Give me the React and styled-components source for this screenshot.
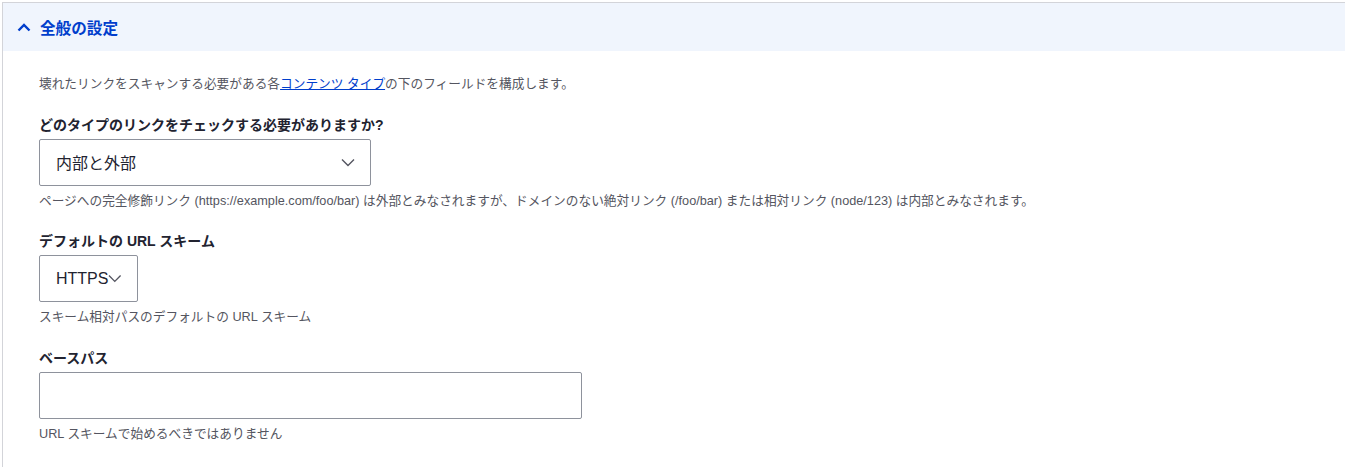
import React from 'react';
import styled, { createGlobalStyle } from 'styled-components';

const GlobalStyle = createGlobalStyle`
  html, body {
    margin: 0;
    background: #fff;
    overflow: hidden;
  }
  body {
    font-family: "Liberation Sans", "Noto Sans CJK JP", sans-serif;
    color: #222330;
  }
`;

const Page = styled.div`
  padding: 2px 0 0 2px;
`;

const Details = styled.section`
  border: 1px solid #d3d4d9;
  border-right: none;
  border-bottom: none;
  min-height: 480px;
`;

const Summary = styled.div`
  display: flex;
  align-items: center;
  gap: 9px;
  height: 48px;
  padding-left: 14px;
  background: #f0f5fd;
  color: #003ecc;
  font-size: 15.6px;
  font-weight: 700;
`;

const Content = styled.div`
  padding: 23px 0 0 36px;
  display: flex;
  flex-direction: column;
  gap: 21.5px;
`;

const Description = styled.div`
  font-size: 12.7px;
  line-height: 20px;
  color: #545560;
  margin-top: ${({ $tight }) => ($tight ? '5px' : '0')};
`;

const Link = styled.a`
  color: #003ecc;
  text-decoration: underline;
`;

const FormItem = styled.div`
  display: flex;
  flex-direction: column;
  align-items: flex-start;
`;

const Label = styled.label`
  font-size: 14px;
  font-weight: 700;
  line-height: 18px;
  margin-bottom: 5px;
  color: #222330;
`;

const SelectBox = styled.div`
  box-sizing: border-box;
  display: flex;
  align-items: center;
  justify-content: space-between;
  width: ${({ $width }) => $width}px;
  height: 47px;
  padding: 0 15px 0 16px;
  border: 1px solid #8e929c;
  border-radius: 2px;
  font-size: 16px;
  color: #222330;
`;

const TextInput = styled.input`
  box-sizing: border-box;
  width: 543px;
  height: 47px;
  border: 1px solid #8e929c;
  border-radius: 2px;
  padding: 0 16px;
  font-size: 16px;
  font-family: inherit;
  outline: none;
`;

const Chevron = ({ up }) => (
  <svg width="14" height="9" viewBox="0 0 14 9" fill="none">
    {up ? (
      <path d="M1.5 7.5 L7 2 L12.5 7.5" stroke="#003ecc" strokeWidth="2.4" />
    ) : (
      <path d="M1 1.5 L7 7.5 L13 1.5" stroke="#545560" strokeWidth="1.4" />
    )}
  </svg>
);

export default function App() {
  return (
    <Page>
      <GlobalStyle />
      <Details>
        <Summary>
          <Chevron up />
          <span>全般の設定</span>
        </Summary>
        <Content>
          <Description>
            壊れたリンクをスキャンする必要がある各<Link href="#">コンテンツ タイプ</Link>の下のフィールドを構成します。
          </Description>
          <FormItem>
            <Label>どのタイプのリンクをチェックする必要がありますか?</Label>
            <SelectBox $width={332}>
              <span>内部と外部</span>
              <Chevron />
            </SelectBox>
            <Description $tight>
              ページへの完全修飾リンク (https://example.com/foo/bar) は外部とみなされますが、ドメインのない絶対リンク (/foo/bar) または相対リンク (node/123) は内部とみなされます。
            </Description>
          </FormItem>
          <FormItem>
            <Label>デフォルトの URL スキーム</Label>
            <SelectBox $width={99}>
              <span>HTTPS</span>
              <Chevron />
            </SelectBox>
            <Description $tight>スキーム相対パスのデフォルトの URL スキーム</Description>
          </FormItem>
          <FormItem>
            <Label>ベースパス</Label>
            <TextInput type="text" />
            <Description $tight>URL スキームで始めるべきではありません</Description>
          </FormItem>
        </Content>
      </Details>
    </Page>
  );
}
